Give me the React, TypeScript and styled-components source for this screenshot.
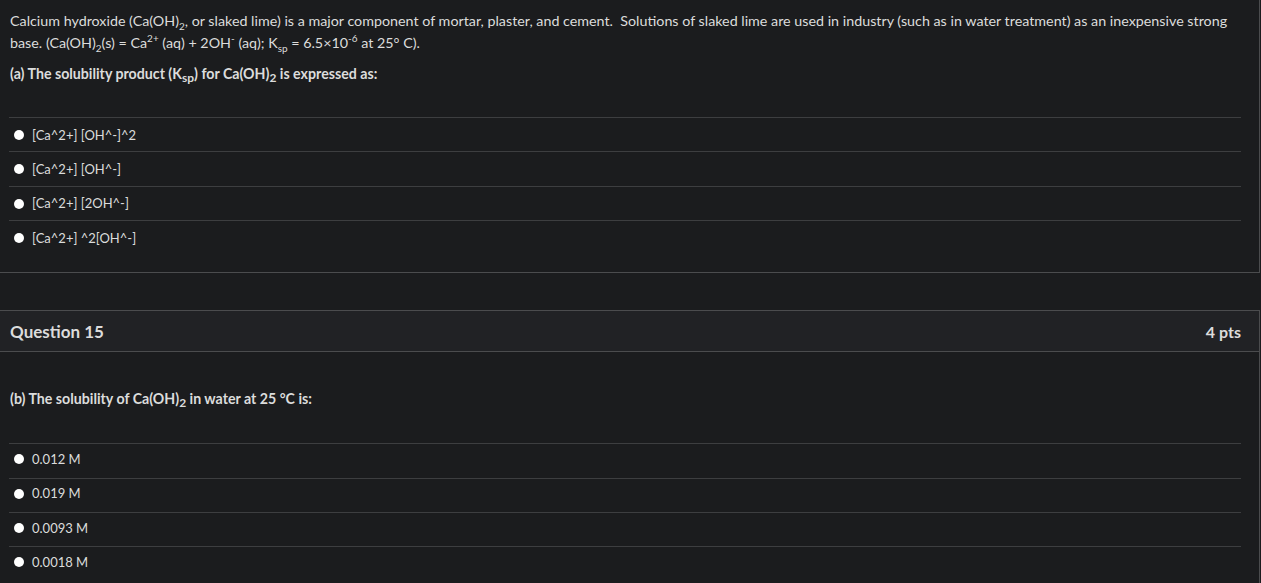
import styled, { createGlobalStyle } from "styled-components";

const GlobalStyle = createGlobalStyle`
    html, body {
        margin: 0;
        padding: 0;
        background-color: #1b1c1e;
    }
    body {
        font-family: Lato, "Noto Sans", "Liberation Sans", sans-serif;
        color: #dcdcdc;
        font-size: 14px;
    }
`

const Page = styled.div`
    display: flex;
    flex-direction: column;
    gap: 37px;
    width: 1261px;
    overflow: hidden;
`

const Card = styled.section`
    width: 1261px;
    margin-left: -1px;
    box-sizing: border-box;
    border: 1px solid #4b4c4e;
    border-top: ${props => props.$open ? "none" : "1px solid #4b4c4e"};
    background-color: #1b1c1e;
`

const CardHeader = styled.header`
    display: flex;
    justify-content: space-between;
    align-items: center;
    height: 40px;
    padding: 0 18px 0 10px;
    background-color: #212225;
    border-bottom: 1px solid #4b4c4e;
    font-size: 17px;
    font-weight: 700;
    color: #dcdcdc;
`

const Points = styled.span`
    font-size: 16px;
`

const CardBody = styled.div`
    padding: ${props => props.$top}px 18px 18px 10px;
`

const Text = styled.p`
    margin: 0;
    font-size: 14.3px;
    line-height: 22px;
    sub, sup {
        font-size: 10px;
        line-height: 0;
    }
`

const Prompt = styled.p`
    margin: ${props => props.$gap}px 0 0 0;
    font-size: 14.2px;
    line-height: 22px;
    font-weight: 700;
    sub {
        font-size: 12px;
        line-height: 0;
        vertical-align: -3px;
    }
`

const Options = styled.ul`
    list-style: none;
    margin: ${props => props.$gap}px 0 0 -1px;
    padding: 0;
`

const Option = styled.li`
    display: flex;
    align-items: center;
    gap: 8px;
    height: 33.33px;
    box-sizing: content-box;
    padding: 0 0 0 5px;
    border-top: 1px solid #3d3e40;
    font-size: 13px;
    color: #dcdcdc;
    & > * {
        position: relative;
        top: ${props => props.$lift ? -2 : 0}px;
    }
`

const Radio = styled.span`
    display: inline-block;
    width: 10px;
    height: 10px;
    border-radius: 50%;
    background-color: #ffffff;
    margin-top: 1px;
`

function AnswerList({ answers, gap, lift }: { answers: string[]; gap: number; lift?: boolean }) {
    return (
        <Options $gap={gap}>
            {answers.map(a => (
                <Option key={a} $lift={lift}>
                    <Radio />
                    <span>{a}</span>
                </Option>
            ))}
        </Options>
    )
}

export default function App() {
    return (
        <Page>
            <GlobalStyle />
            <Card $open>
                <CardBody $top={10}>
                    <Text>
                        Calcium hydroxide (Ca(OH)<sub>2</sub>, or slaked lime) is a major component of mortar, plaster, and cement.&nbsp; Solutions of slaked lime are used in industry (such as in water treatment) as an inexpensive strong base. (Ca(OH)<sub>2</sub>(s) = Ca<sup>2+</sup> (aq) + 2OH<sup>-</sup> (aq); K<sub>sp</sub> = 6.5×10<sup>-6</sup> at 25° C).
                    </Text>
                    <Prompt $gap={9}>
                        (a) The solubility product (K<sub>sp</sub>) for Ca(OH)<sub>2</sub> is expressed as:
                    </Prompt>
                    <AnswerList
                        gap={32}
                        answers={["[Ca^2+] [OH^-]^2", "[Ca^2+] [OH^-]", "[Ca^2+] [2OH^-]", "[Ca^2+] ^2[OH^-]"]}
                    />
                </CardBody>
            </Card>
            <Card>
                <CardHeader>
                    <span>Question 15</span>
                    <Points>4 pts</Points>
                </CardHeader>
                <CardBody $top={36}>
                    <Prompt $gap={0}>
                        (b) The solubility of Ca(OH)<sub>2</sub> in water at 25 °C is:
                    </Prompt>
                    <AnswerList gap={33} lift answers={["0.012 M", "0.019 M", "0.0093 M", "0.0018 M"]} />
                </CardBody>
            </Card>
        </Page>
    )
}
